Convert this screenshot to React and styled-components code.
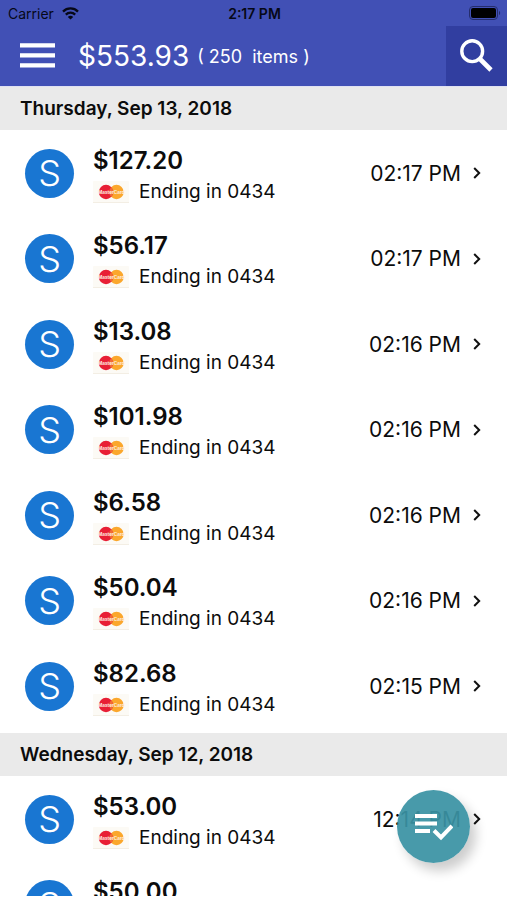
import React from 'react';
import styled, { createGlobalStyle } from 'styled-components';

const groups = [
	{
		date: 'Thursday, Sep 13, 2018',
		items: [
			{ amount: '$127.20', time: '02:17 PM' },
			{ amount: '$56.17', time: '02:17 PM' },
			{ amount: '$13.08', time: '02:16 PM' },
			{ amount: '$101.98', time: '02:16 PM' },
			{ amount: '$6.58', time: '02:16 PM' },
			{ amount: '$50.04', time: '02:16 PM' },
			{ amount: '$82.68', time: '02:15 PM' },
		],
	},
	{
		date: 'Wednesday, Sep 12, 2018',
		items: [
			{ amount: '$53.00', time: '12:14 PM' },
			{ amount: '$50.00', time: '12:10 PM' },
		],
	},
];

const WifiIcon = () => (
	<svg width="17" height="13" viewBox="0 0 17 13" aria-hidden="true">
		<g fill="none" stroke="#060817" strokeWidth="2.3">
			<path d="M1 4.6C5.2.4 11.8.4 16 4.6" />
			<path d="M3.8 7.6c2.7-2.6 6.7-2.6 9.4 0" />
		</g>
		<path d="M8.5 12.6 5.8 9.9c1.5-1.4 3.9-1.4 5.4 0z" fill="#060817" />
	</svg>
);

const BatteryIcon = () => (
	<svg width="32" height="14" viewBox="0 0 32 14" aria-hidden="true">
		<rect x="0.5" y="0.5" width="28" height="13" rx="3.5" fill="none" stroke="#252d6c" />
		<rect x="2" y="2" width="25" height="10" rx="2" fill="#000" />
		<path d="M30 5c1.5.4 1.5 3.6 0 4z" fill="#252d6c" />
	</svg>
);

const MenuIcon = () => (
	<svg width="35" height="26" viewBox="0 0 35 26" aria-hidden="true">
		<path d="M0 2.400h35M0 12.400h35M0 22.400h35" stroke="#fff" strokeWidth="4.400" />
	</svg>
);

const SearchIcon = () => (
	<svg width="34" height="34" viewBox="0 0 34 34" aria-hidden="true">
		<circle cx="12.2" cy="12.2" r="10.4" fill="none" stroke="#fff" strokeWidth="3.4" />
		<path d="M20 20l11 11" stroke="#fff" strokeWidth="4.6" />
	</svg>
);

const ChevronIcon = () => (
	<svg width="8" height="12" viewBox="0 0 8 12" aria-hidden="true">
		<path d="m1.2 1 5 5-5 5" fill="none" stroke="#111" strokeWidth="2" />
	</svg>
);

const CardIcon = () => (
	<svg width="36" height="22" viewBox="0 0 36 22" role="img" aria-label="MasterCard">
		<rect width="36" height="22" rx="1" fill="#fcfaf5" />
		<path d="M0 21.5h36" stroke="#f3eee4" />
		<circle cx="23.5" cy="11" r="7.2" fill="#fba72c" />
		<circle cx="13" cy="11" r="7.2" fill="#e81f35" />
		<path d="M18.2 6a7.2 7.2 0 0 1 0 10 7.2 7.2 0 0 1 0-10" fill="#f26a35" />
		<text
			x="18.3"
			y="12.8"
			textAnchor="middle"
			fontSize="4.6"
			fontWeight="700"
			fontFamily="Inter, sans-serif"
			fill="#fff0e4"
		>
			MasterCard
		</text>
	</svg>
);

const ChecklistIcon = () => (
	<svg width="38" height="28" viewBox="0 0 38 28" aria-hidden="true">
		<g fill="none" stroke="#fff" strokeWidth="4">
			<path d="M0 3h22M0 10.5h22M0 18h15" />
			<path d="m19 17.5 7 7L37 13" />
		</g>
	</svg>
);

const App = () => {
	return (
		<>
			<GlobalStyle />
			<Screen>
				<TopBar>
					<StatusBar>
						<Carrier>
							Carrier
							<WifiIcon />
						</Carrier>
						<Clock>2:17 PM</Clock>
						<Battery>
							<BatteryIcon />
						</Battery>
					</StatusBar>
					<Toolbar>
						<MenuButton type="button" aria-label="Menu">
							<MenuIcon />
						</MenuButton>
						<Total>$553.93</Total>
						<Count>{'( 250  items )'}</Count>
						<SearchButton type="button" aria-label="Search">
							<SearchIcon />
						</SearchButton>
					</Toolbar>
				</TopBar>
				<main>
					{groups.map((group) => (
						<section key={group.date}>
							<DateHeader>{group.date}</DateHeader>
							<List>
								{group.items.map((item) => (
									<Row key={item.amount}>
										<RowButton type="button">
											<Avatar>S</Avatar>
											<Details>
												<Amount>{item.amount}</Amount>
												<CardLine>
													<CardIcon />
													Ending in 0434
												</CardLine>
											</Details>
											<Time>{item.time}</Time>
											<ChevronIcon />
										</RowButton>
									</Row>
								))}
							</List>
						</section>
					))}
				</main>
				<ActionButton type="button" aria-label="Select items">
					<ChecklistIcon />
				</ActionButton>
			</Screen>
		</>
	);
};

export default App;

const GlobalStyle = createGlobalStyle`
	* {
		box-sizing: border-box;
	}

	body {
		margin: 0;
		background-color: #fff;
		color: #0c0c0c;
		font-family: Inter, 'Liberation Sans', sans-serif;
	}

	button {
		border: none;
		padding: 0;
		background: none;
		color: inherit;
		font: inherit;
		cursor: pointer;
	}

	svg {
		display: block;
		flex-shrink: 0;
	}
`;

const Screen = styled.div`
	position: relative;
	height: calc(100vh - 4px);
	overflow: hidden;
`;

const TopBar = styled.header`
	background-color: #4150b5;
	border-bottom: 1px solid #dfe1f2;
`;

const StatusBar = styled.div`
	display: grid;
	grid-template-columns: 1fr auto 1fr;
	align-items: center;
	height: 26px;
	padding: 0 6px 0 8px;
	color: #060817;
	font-size: 14px;
`;

const Carrier = styled.div`
	display: flex;
	align-items: center;
	gap: 8px;
`;

const Clock = styled.div`
	font-weight: 600;
`;

const Battery = styled.div`
	justify-self: end;
`;

const Toolbar = styled.div`
	display: flex;
	align-items: center;
	height: 60px;
	color: #fff;
`;

const MenuButton = styled.button`
	padding: 0 23px 0 20px;
`;

const Total = styled.h1`
	margin: 0;
	font-size: 28px;
	font-weight: 400;
`;

const Count = styled.span`
	margin-left: 8px;
	font-size: 18px;
	white-space: pre;
`;

const SearchButton = styled.button`
	display: flex;
	align-items: center;
	justify-content: center;
	align-self: stretch;
	width: 61px;
	margin-left: auto;
	background-color: #313ea0;
`;

const DateHeader = styled.h2`
	display: flex;
	align-items: center;
	height: 43px;
	margin: 0;
	padding: 0 20px;
	background-color: #eaeaea;
	font-size: 19px;
	font-weight: 600;
`;

const List = styled.ul`
	margin: 0;
	padding: 0 0 4px;
	list-style: none;
`;

const Row = styled.li`
	height: 86px;

	&:nth-child(even) {
		height: 85px;
	}
`;

const RowButton = styled.button`
	display: flex;
	align-items: center;
	width: 100%;
	height: 100%;
	padding: 0 26px 0 25px;
	text-align: left;
`;

const Avatar = styled.span`
	display: flex;
	align-items: center;
	justify-content: center;
	width: 49px;
	height: 49px;
	border-radius: 50%;
	background-color: #1976d2;
	color: #fff;
	font-size: 36px;
	font-weight: 300;
`;

const Details = styled.span`
	flex: 1;
	margin-left: 19px;
	padding-top: 5px;
`;

const Amount = styled.span`
	display: block;
	font-size: 24px;
	font-weight: 600;
	line-height: 32px;
`;

const CardLine = styled.span`
	display: flex;
	align-items: center;
	gap: 10px;
	font-size: 19px;
	line-height: 30px;
`;

const Time = styled.span`
	margin-right: 12px;
	font-size: 21px;
`;

const ActionButton = styled.button`
	position: absolute;
	right: 37px;
	bottom: 33px;
	display: flex;
	align-items: center;
	justify-content: center;
	width: 73px;
	height: 73px;
	border-radius: 50%;
	background-color: rgba(58, 146, 164, 0.93);
	box-shadow: 6px 8px 12px rgba(0, 0, 0, 0.2);
`;
